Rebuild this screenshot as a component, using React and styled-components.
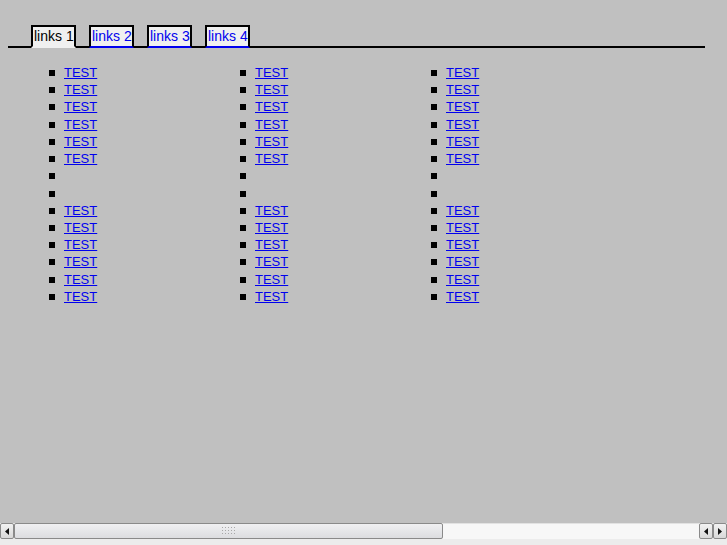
import React from 'react';
import styled, { createGlobalStyle } from 'styled-components';

const tabs = ['links 1', 'links 2', 'links 3', 'links 4'];
const items = ['TEST', 'TEST', 'TEST', 'TEST', 'TEST', 'TEST', '', '', 'TEST', 'TEST', 'TEST', 'TEST', 'TEST', 'TEST'];

function App() {
    return (
        <>
            <GlobalStyle />
            <StPage>
                <StContent>
                    <StTabBar>
                        {tabs.map((t, i) => (
                            <StTab key={t} active={i === 0}>
                                {i === 0 ? t : <a href="#">{t}</a>}
                            </StTab>
                        ))}
                    </StTabBar>
                    <StColumns>
                        {[0, 1, 2].map((c) => (
                            <StList key={c}>
                                {items.map((it, i) => (
                                    <StItem key={i}>{it && <a href="#">{it}</a>}</StItem>
                                ))}
                            </StList>
                        ))}
                    </StColumns>
                </StContent>
                <StScrollStrip>
                    <StArrowBtn>
                        <Arrow dir="left" />
                    </StArrowBtn>
                    <StThumb>
                        <Grip />
                    </StThumb>
                    <StTrack />
                    <StArrowBtn>
                        <Arrow dir="left" />
                    </StArrowBtn>
                    <StArrowBtn>
                        <Arrow dir="right" />
                    </StArrowBtn>
                </StScrollStrip>
            </StPage>
        </>
    );
}

function Arrow({ dir }) {
    return (
        <svg width="4" height="7" viewBox="0 0 4 7">
            {dir === 'left' ? <path d="M4 0 L0 3.5 L4 7 Z" fill="#111" /> : <path d="M0 0 L4 3.5 L0 7 Z" fill="#111" />}
        </svg>
    );
}

function Grip() {
    const dots = [];
    for (let r = 0; r < 3; r++) {
        for (let c = 0; c < 5; c++) {
            dots.push(<rect key={r + '-' + c} x={c * 3} y={r * 3} width="1" height="1" fill="#a8a8a8" />);
        }
    }
    return (
        <svg width="14" height="8" viewBox="0 0 14 8">
            {dots}
        </svg>
    );
}

export default App;

const GlobalStyle = createGlobalStyle`
    html, body {
        margin: 0;
        padding: 0;
        background: #c0c0c0;
        overflow: hidden;
    }
    body {
        font-family: "Liberation Sans", Arial, sans-serif;
    }
    a {
        color: #0000ee;
    }
`;

const StPage = styled.div`
    height: 100vh;
    display: flex;
    flex-direction: column;
`;

const StContent = styled.div`
    flex: 1;
    padding: 25px 0 0 8px;
    overflow: hidden;
`;

const StTabBar = styled.div`
    width: 674px;
    display: flex;
    align-items: flex-end;
    gap: 13px;
    padding-left: 23px;
    border-bottom: 2px solid #000;
    height: 21px;
`;

const StTab = styled.div`
    width: 40px;
    height: 19px;
    margin-bottom: -2px;
    border: 2px solid #000;
    border-bottom: 2px solid ${(p) => (p.active ? '#f0f0f0' : '#0000ee')};
    background: #f0f0f0;
    padding: 0 0 0 1px;
    font-size: 14px;
    line-height: 19px;
    color: #000;
    white-space: nowrap;
    overflow: hidden;
    a {
        text-decoration: none;
    }
`;

const StColumns = styled.div`
    display: grid;
    grid-template-columns: repeat(3, 191px);
    margin-top: 16px;
    padding-left: 56px;
`;

const StList = styled.ul`
    list-style: none;
    margin: 0;
    padding: 0;
`;

const StItem = styled.li`
    position: relative;
    height: 17.23px;
    font-size: 13px;
    line-height: 17.23px;
    &::before {
        content: '';
        position: absolute;
        left: -15px;
        top: 6px;
        width: 6px;
        height: 6px;
        background: #000;
    }
`;

const StScrollStrip = styled.div`
    height: 22px;
    flex: none;
    display: flex;
    align-items: flex-start;
    background: #ececec;
`;

const StArrowBtn = styled.div`
    width: 12px;
    height: 14px;
    border: 1px solid #8a8a8a;
    border-radius: 2px;
    background: linear-gradient(#f2f2f2, #d8d8d8);
    display: flex;
    align-items: center;
    justify-content: center;
    flex: none;
`;

const StThumb = styled.div`
    width: 427px;
    height: 14px;
    border: 1px solid #8a8a8a;
    border-radius: 2px;
    background: linear-gradient(#f0f0f2, #dcdde0);
    display: flex;
    align-items: center;
    justify-content: center;
    flex: none;
`;

const StTrack = styled.div`
    flex: 1;
    height: 16px;
    background: #f7f7f7;
    border-top: 1px solid #e2e2e2;
    box-sizing: border-box;
`;
